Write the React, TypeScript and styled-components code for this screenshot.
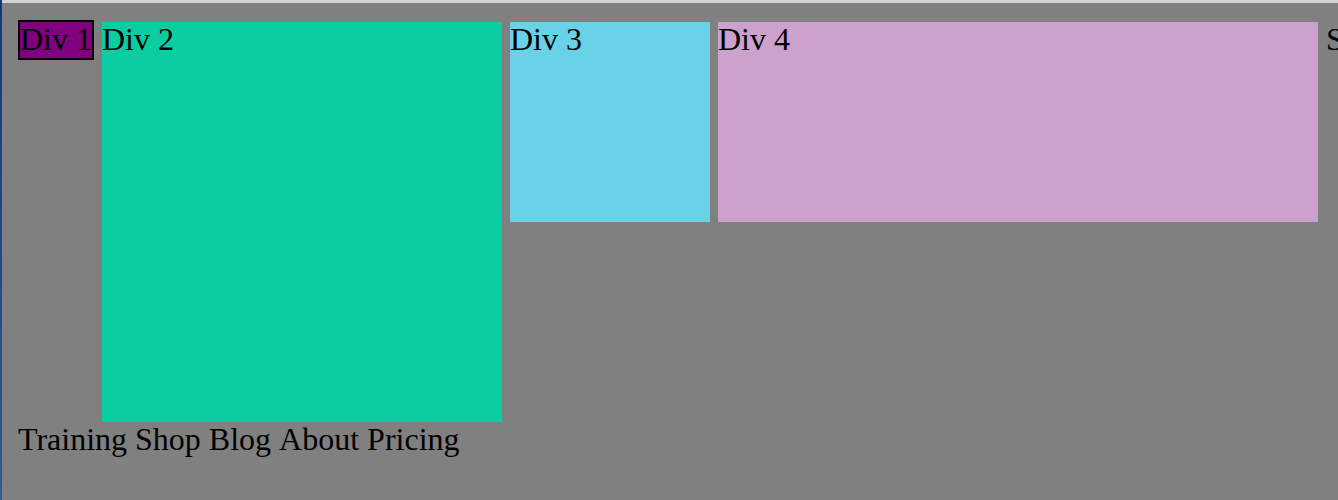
import React from "react";
import styled, { createGlobalStyle } from "styled-components";

const GlobalStyle = createGlobalStyle`
  * {
    box-sizing: border-box;
  }
  body {
    margin: 0;
    background: #808080;
    color: #000;
    font-family: "Liberation Serif", "Times New Roman", serif;
    font-size: 32px;
    line-height: 34px;
  }
`;

const Frame = styled.div`
  min-height: 100vh;
  padding-left: 2px;
  display: flex;
  background: linear-gradient(#12397a, #34588f);
`;

const Page = styled.main`
  flex: 1;
  min-width: 0;
  padding: 17px 0 16px 16px;
  overflow: hidden;
  border-top: 3px solid #d3d3d3;
  background: #808080;
`;

const Row = styled.div`
  display: flex;
  align-items: flex-start;
  gap: 8px;
  white-space: nowrap;
`;

const Tag = styled.div`
  flex: none;
  padding-bottom: 2px;
  border: 2px solid #000;
  background: #800080;
`;

const Box = styled.div<{ $width: number; $height: number; $color: string }>`
  flex: none;
  width: ${(p) => p.$width}px;
  height: ${(p) => p.$height}px;
  margin-top: 2px;
  background: ${(p) => p.$color};
`;

const Label = styled.span`
  flex: none;
  margin-top: 2px;
`;

const Nav = styled.nav`
  display: flex;
  flex-wrap: wrap;
  column-gap: 8px;
`;

const boxes = [
  { name: "Div 2", width: 400, height: 400, color: "#0acda2" },
  { name: "Div 3", width: 200, height: 200, color: "#69d2e7" },
  { name: "Div 4", width: 600, height: 200, color: "#cca2cd" },
];

const items = ["Training", "Shop", "Blog", "About", "Pricing"];

export default function App() {
  return (
    <>
      <GlobalStyle />
      <Frame>
        <Page>
          <Row>
            <Tag>Div 1</Tag>
            {boxes.map((b) => (
              <Box key={b.name} $width={b.width} $height={b.height} $color={b.color}>
                {b.name}
              </Box>
            ))}
            <Label>S</Label>
          </Row>
          <Nav>
            {items.map((item) => (
              <span key={item}>{item}</span>
            ))}
          </Nav>
        </Page>
      </Frame>
    </>
  );
}
